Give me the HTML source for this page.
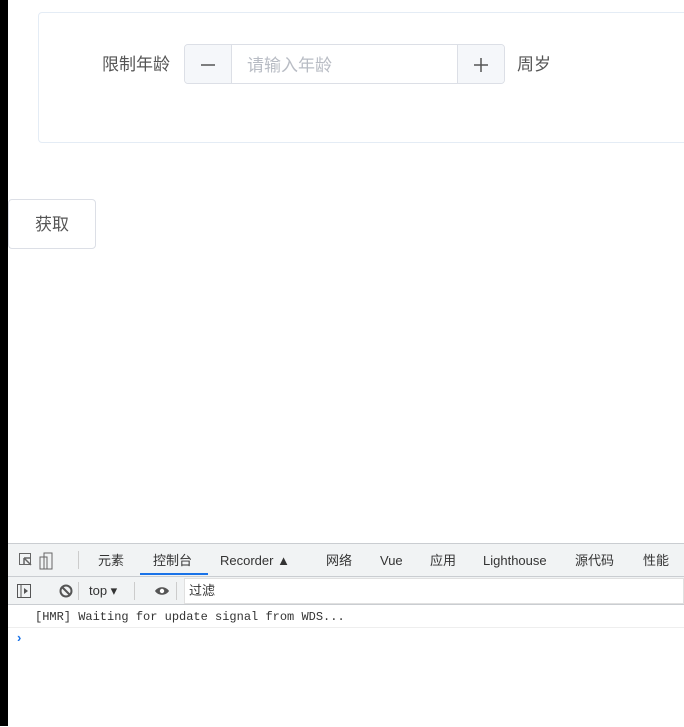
<!DOCTYPE html>
<html><head><meta charset="utf-8"><style>
body{margin:0;width:684px;height:726px;position:relative;overflow:hidden;background:#fff;font-family:"Liberation Sans","Noto Sans CJK SC",sans-serif;}
.bl{position:absolute;left:0;top:0;width:8px;height:726px;background:#000}
.card{position:absolute;left:38px;top:12px;width:660px;height:131px;border:1px solid #e4ecf5;border-radius:4px;box-sizing:border-box}
.t{position:absolute;font-size:17px;color:#555;line-height:20px}
.num{position:absolute;left:184px;top:44px;width:321px;height:40px;border:1px solid #dcdfe6;border-radius:4px;box-sizing:border-box;overflow:hidden}
.btn{position:absolute;top:0;width:46px;height:38px;background:#f5f7fa}
.get{position:absolute;left:8px;top:199px;width:88px;height:50px;border:1px solid #dcdfe6;border-radius:4px;box-sizing:border-box;text-align:center;line-height:50px;font-size:17px;color:#555}
.dt{position:absolute;left:8px;top:543px;width:676px;height:183px;background:#fff;border-top:1px solid #cacdd1}
.tabs{height:32px;background:#f1f3f4;border-bottom:1px solid #cacdd1;font-size:13px;color:#333;position:relative}
.tabs span{position:absolute;top:9px;line-height:16px}
.tb{height:27px;background:#f1f3f4;border-bottom:1px solid #cacdd1;position:relative;font-size:13px;color:#333}
.tb span{line-height:16px}
</style></head><body>
<div class="bl"></div>
<div class="card"></div>
<div class="t" style="left:102px;top:55px">限制年龄</div>
<div class="num">
 <div class="btn" style="left:0;border-right:1px solid #dcdfe6"><svg width="46" height="38"><path d="M16 20h14" stroke="#555" stroke-width="1.5"/></svg></div>
 <div style="position:absolute;left:62px;top:11px;font-size:17px;line-height:20px;color:#b8bcc4">请输入年龄</div>
 <div class="btn" style="right:0;border-left:1px solid #dcdfe6"><svg width="46" height="38"><path d="M16 20h14M23 13v14" stroke="#555" stroke-width="1.5"/></svg></div>
</div>
<div class="t" style="left:517px;top:55px">周岁</div>
<div class="get">获取</div>
<div class="dt">
 <div class="tabs">
  <svg style="position:absolute;left:10px;top:8px" width="36" height="18"><rect x="1.5" y="1.5" width="11" height="11" fill="none" stroke="#666"/><path d="M6 6l7 7M6 6v6M6 6h6" stroke="#666" stroke-width="1.5" fill="none"/><rect x="22" y="5" width="7" height="12" fill="none" stroke="#666"/><rect x="26" y="1" width="8" height="16" fill="none" stroke="#666"/></svg>
  <div style="position:absolute;left:70px;top:7px;width:1px;height:18px;background:#ccc"></div>
  <span style="left:90px">元素</span>
  <span style="left:145px">控制台</span>
  <div style="position:absolute;left:132px;top:29px;width:68px;height:2px;background:#1a73e8"></div>
  <span style="left:212px">Recorder ▲</span>
  <span style="left:318px">网络</span>
  <span style="left:372px">Vue</span>
  <span style="left:422px">应用</span>
  <span style="left:475px">Lighthouse</span>
  <span style="left:567px">源代码</span>
  <span style="left:635px">性能</span>
 </div>
 <div class="tb">
  <svg style="position:absolute;left:8px;top:6px" width="160" height="16"><rect x="1.5" y="1.5" width="13" height="13" fill="none" stroke="#555"/><path d="M5 2v12" stroke="#555"/><path d="M8 5l4 3-4 3z" fill="#555"/><circle cx="50" cy="8" r="5.5" fill="none" stroke="#555" stroke-width="2"/><path d="M46 4l8 8" stroke="#555" stroke-width="2"/><path d="M139 8c3-5 11-5 14 0c-3 5-11 5-14 0z" fill="#555"/><circle cx="146" cy="8" r="2.2" fill="#fff"/></svg>
  <div style="position:absolute;left:70px;top:5px;width:1px;height:18px;background:#ccc"></div>
  <span style="position:absolute;left:81px;top:6px">top ▾</span>
  <div style="position:absolute;left:126px;top:5px;width:1px;height:18px;background:#ccc"></div>
  <div style="position:absolute;left:168px;top:5px;width:1px;height:18px;background:#ccc"></div>
  <div style="position:absolute;left:176px;top:1px;right:0;height:24px;background:#fff;border:1px solid #e0e0e0"></div>
  <span style="position:absolute;left:181px;top:6px">过滤</span>
 </div>
 <div style="height:22px;border-bottom:1px solid #eee;font-family:'Liberation Mono',monospace;font-size:12px;color:#333;line-height:24px;padding-left:27px">[HMR] Waiting for update signal from WDS...</div>
 <div style="position:absolute;left:9px;top:86px;color:#1a73e8;font-size:13px;font-weight:bold">›</div>
</div>
</body></html>
